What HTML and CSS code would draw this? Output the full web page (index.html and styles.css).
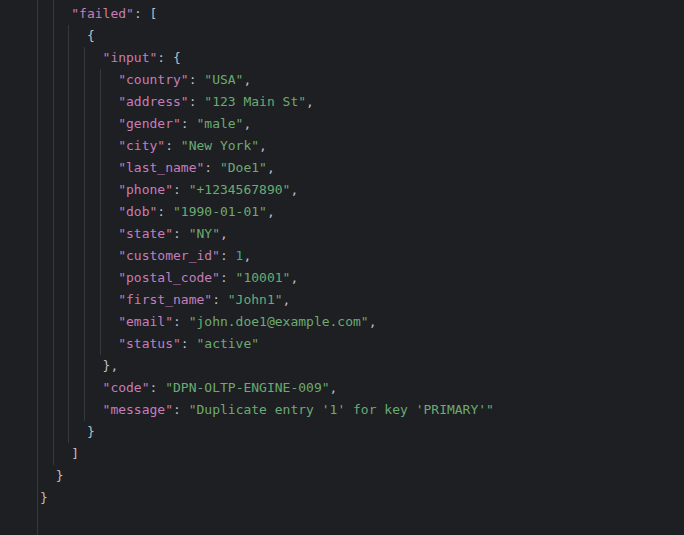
FILE: index.html
```html
<!DOCTYPE html>
<html>
<head>
<meta charset="utf-8">
<link rel="stylesheet" href="styles.css">
</head>
<body>
<div class="editor">
  <div class="inner">
    <div class="blk top">
      <div class="ln"><span class="k">"failed"</span><span class="p">: [</span></div>
      <div class="blk">
        <div class="ln"><span class="p">{</span></div>
        <div class="blk">
          <div class="ln"><span class="k">"input"</span><span class="p">: {</span></div>
          <div class="blk">
            <div class="ln"><span class="k">"country"</span><span class="p">: </span><span class="s">"USA"</span><span class="p">,</span></div>
            <div class="ln"><span class="k">"address"</span><span class="p">: </span><span class="s">"123 Main St"</span><span class="p">,</span></div>
            <div class="ln"><span class="k">"gender"</span><span class="p">: </span><span class="s">"male"</span><span class="p">,</span></div>
            <div class="ln"><span class="k">"city"</span><span class="p">: </span><span class="s">"New York"</span><span class="p">,</span></div>
            <div class="ln"><span class="k">"last_name"</span><span class="p">: </span><span class="s">"Doe1"</span><span class="p">,</span></div>
            <div class="ln"><span class="k">"phone"</span><span class="p">: </span><span class="s">"+1234567890"</span><span class="p">,</span></div>
            <div class="ln"><span class="k">"dob"</span><span class="p">: </span><span class="s">"1990-01-01"</span><span class="p">,</span></div>
            <div class="ln"><span class="k">"state"</span><span class="p">: </span><span class="s">"NY"</span><span class="p">,</span></div>
            <div class="ln"><span class="k">"customer_id"</span><span class="p">: </span><span class="n">1</span><span class="p">,</span></div>
            <div class="ln"><span class="k">"postal_code"</span><span class="p">: </span><span class="s">"10001"</span><span class="p">,</span></div>
            <div class="ln"><span class="k">"first_name"</span><span class="p">: </span><span class="s">"John1"</span><span class="p">,</span></div>
            <div class="ln"><span class="k">"email"</span><span class="p">: </span><span class="s">"john.doe1@example.com"</span><span class="p">,</span></div>
            <div class="ln"><span class="k">"status"</span><span class="p">: </span><span class="s">"active"</span></div>
          </div>
          <div class="ln"><span class="p">},</span></div>
          <div class="ln"><span class="k">"code"</span><span class="p">: </span><span class="s">"DPN-OLTP-ENGINE-009"</span><span class="p">,</span></div>
          <div class="ln"><span class="k">"message"</span><span class="p">: </span><span class="s">"Duplicate entry '1' for key 'PRIMARY'"</span></div>
        </div>
        <div class="ln"><span class="p">}</span></div>
      </div>
      <div class="ln"><span class="p">]</span></div>
    </div>
    <div class="ln"><span class="p">}</span></div>
  </div>
  <div class="ln"><span class="p">}</span></div>
</div>
</body>
</html>
```

FILE: styles.css
```css
html, body {
  margin: 0;
  padding: 0;
  background: #1e1f22;
}

.editor {
  box-sizing: border-box;
  min-height: 535px;
  margin-left: 37px;
  border-left: 1px solid #35373b;
  padding-left: 2px;
  font-family: "DejaVu Sans Mono", "Liberation Mono", monospace;
  font-size: 13px;
  line-height: 22px;
  color: #bcbec4;
}

.inner {
  padding-left: 2ch;
}

.blk {
  margin-left: -3px;
  border-left: 1px solid #35373b;
  padding-left: calc(2ch + 2px);
}

.blk.top {
  padding-top: 3px;
}

.ln {
  white-space: pre;
  height: 22px;
}

.k { color: #c77dbb; }
.s { color: #6aab73; }
.n { color: #2aacb8; }
.p { color: #bcbec4; }
```
